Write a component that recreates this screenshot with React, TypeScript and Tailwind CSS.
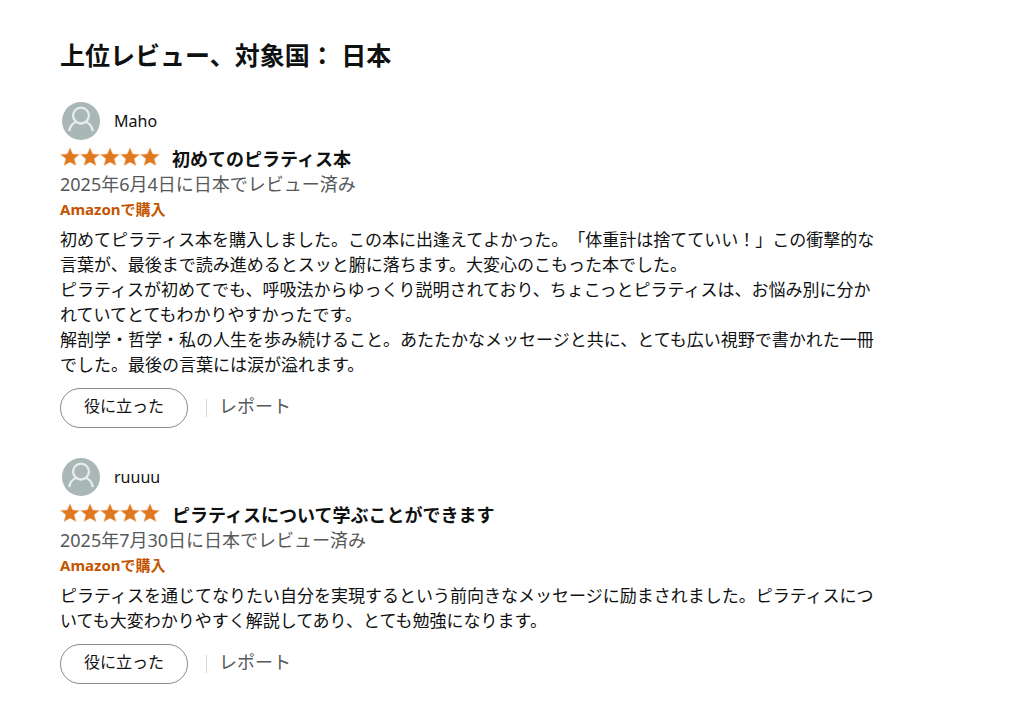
type Review = {
  id: string;
  name: string;
  title: string;
  date: string;
  body: string[];
};

const reviews: Review[] = [
  {
    id: "maho",
    name: "Maho",
    title: "初めてのピラティス本",
    date: "2025年6月4日に日本でレビュー済み",
    body: [
      "初めてピラティス本を購入しました。この本に出逢えてよかった。「体重計は捨てていい！」この衝撃的な言葉が、最後まで読み進めるとスッと腑に落ちます。大変心のこもった本でした。",
      "ピラティスが初めてでも、呼吸法からゆっくり説明されており、ちょこっとピラティスは、お悩み別に分かれていてとてもわかりやすかったです。",
      "解剖学・哲学・私の人生を歩み続けること。あたたかなメッセージと共に、とても広い視野で書かれた一冊でした。最後の言葉には涙が溢れます。",
    ],
  },
  {
    id: "ruuuu",
    name: "ruuuu",
    title: "ピラティスについて学ぶことができます",
    date: "2025年7月30日に日本でレビュー済み",
    body: [
      "ピラティスを通じてなりたい自分を実現するという前向きなメッセージに励まされました。ピラティスについても大変わかりやすく解説してあり、とても勉強になります。",
    ],
  },
];

function Avatar() {
  return (
    <svg viewBox="0 0 38 38" className="size-[38px]" aria-hidden="true">
      <circle cx="19" cy="19" r="19" fill="#a9b7b7" />
      <g fill="none" stroke="#e8ecec" strokeWidth="2.3">
        <circle cx="19" cy="13.6" r="7.9" />
        <path d="M7.2 29.2C7.8 24.6 10.3 21.4 14.4 19.8M30.8 29.2C30.2 24.6 27.7 21.4 23.6 19.8" />
      </g>
    </svg>
  );
}

function Stars() {
  return (
    <svg
      viewBox="0 0 100 20"
      className="h-5 w-[100px] shrink-0"
      role="img"
      aria-label="5つ星のうち5.0"
    >
      {[0, 20, 40, 60, 80].map((x) => (
        <path
          key={x}
          transform={`translate(${x} 0)`}
          d="M10 .8l2.7 6.2 6.7.5-5.2 4.3 1.8 6.8L10 15.2l-6 3.4 1.8-6.8L.6 7.5 7.3 7z"
          fill="#de7921"
          stroke="#f1b884"
          strokeWidth="0.6"
        />
      ))}
    </svg>
  );
}

function ReviewItem({ review }: { review: Review }) {
  return (
    <article>
      <a href="#" className="ml-0.5 inline-flex items-center gap-3.5 align-top text-base">
        <Avatar />
        <span>{review.name}</span>
      </a>
      <div className="mt-[7px] flex items-start gap-3">
        <Stars />
        <h3 className="text-[18px] leading-[25px] font-bold">{review.title}</h3>
      </div>
      <p className="text-[18px] leading-[25px] text-[#565959]">{review.date}</p>
      <p className="text-[15px] leading-[25px] font-bold text-[#c45500]">Amazonで購入</p>
      <div className="mt-[5px] max-w-[820px] text-[17px] leading-[25px] [text-spacing-trim:space-all]">
        {review.body.map((text, i) => (
          <p key={i}>{text}</p>
        ))}
      </div>
      <div className="mt-[11px] flex items-center">
        <button
          type="button"
          className="h-10 rounded-full border border-[#888c8c] px-[23px] pb-1 text-base"
        >
          役に立った
        </button>
        <span className="ml-[18px] h-[18px] w-px bg-[#d5d9d9]" />
        <a href="#" className="ml-3 pb-1 text-[18px] leading-[25px] text-[#565959]">
          レポート
        </a>
      </div>
    </article>
  );
}

export default function App() {
  return (
    <main
      lang="ja"
      className="min-h-screen bg-white px-[60px] pt-[39px] pb-5 font-['Noto_Sans','Noto_Sans_CJK_JP',sans-serif] text-[#0f1111]"
    >
      <h2 className="text-[25px] leading-8 font-bold">上位レビュー、対象国： 日本</h2>
      <div className="mt-[31px] flex flex-col gap-[30px]">
        {reviews.map((review) => (
          <ReviewItem key={review.id} review={review} />
        ))}
      </div>
    </main>
  );
}
